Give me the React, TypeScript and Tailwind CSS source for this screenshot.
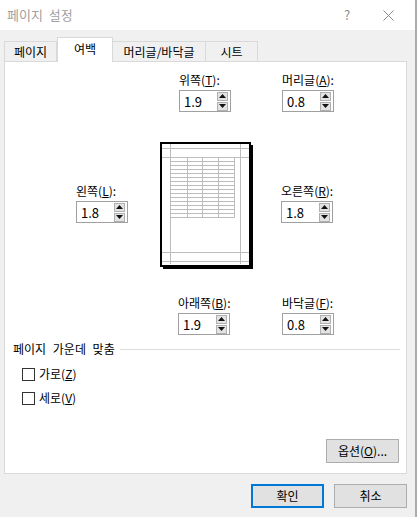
import React from "react";

const font = { fontFamily: '"Noto Sans CJK KR", "Noto Sans", sans-serif' };

function SpinField({ label, hotkey, value }: { label: string; hotkey: string; value: string }) {
  return (
    <div className="w-[52px] flex flex-col">
      <div className="text-[12px] leading-[14px] whitespace-nowrap text-black">
        {label}(<u>{hotkey}</u>):
      </div>
      <div className="mt-[3px] w-[52px] h-[22px] border border-[#a0a0a0] bg-white flex items-center">
        <span className="pl-[4px] text-[13px] leading-none text-black flex-1">{value}</span>
        <div className="flex flex-col gap-[1px] mr-[2px]">
          <div className="w-[11px] h-[9px] bg-[#e3e3e3] border border-[#b0b0b0] flex items-center justify-center">
            <svg width="7" height="4" viewBox="0 0 7 4">
              <polygon points="3.5,0 7,4 0,4" fill="#111" />
            </svg>
          </div>
          <div className="w-[11px] h-[9px] bg-[#e3e3e3] border border-[#b0b0b0] flex items-center justify-center">
            <svg width="7" height="4" viewBox="0 0 7 4">
              <polygon points="0,0 7,0 3.5,4" fill="#111" />
            </svg>
          </div>
        </div>
      </div>
    </div>
  );
}

function PagePreview() {
  const rows = Array.from({ length: 16 }, (_, i) => 15.5 + i * 4);
  return (
    <svg width="94" height="127" viewBox="0 0 94 127">
      <rect x="3" y="3" width="90" height="124" fill="#000" />
      <rect x="1" y="1" width="89" height="123" fill="#fff" stroke="#000" strokeWidth="2" />
      <g stroke="#bdbdbd" strokeWidth="1" fill="none">
        <line x1="10.5" y1="2" x2="10.5" y2="122" />
        <line x1="80.5" y1="2" x2="80.5" y2="122" />
        <line x1="2" y1="6.5" x2="89" y2="6.5" />
        <line x1="2" y1="15.5" x2="89" y2="15.5" />
        <line x1="2" y1="110.5" x2="89" y2="110.5" />
        <line x1="2" y1="119.5" x2="89" y2="119.5" />
        {rows.map((y) => (
          <line key={y} x1="10.5" y1={y} x2="74.5" y2={y} />
        ))}
        <line x1="27.5" y1="15.5" x2="27.5" y2="75.5" />
        <line x1="42.5" y1="15.5" x2="42.5" y2="75.5" />
        <line x1="58.5" y1="15.5" x2="58.5" y2="75.5" />
        <line x1="74.5" y1="15.5" x2="74.5" y2="75.5" />
      </g>
    </svg>
  );
}

function Checkbox({ label, hotkey }: { label: string; hotkey: string }) {
  return (
    <div className="flex items-center gap-[4px] h-[14px]">
      <div className="w-[13px] h-[13px] border border-[#333] bg-white" />
      <span className="text-[12px] leading-[14px] text-black">
        {label}(<u>{hotkey}</u>)
      </span>
    </div>
  );
}

export default function App() {
  return (
    <div className="w-[417px] h-[517px] bg-[#f0f0f0] border-r-2 border-[#ababab] flex flex-col" style={font}>
      {/* Title bar */}
      <div className="h-[30px] bg-white flex items-center pl-[7px] pr-[17px] shrink-0">
        <span className="text-[13px] text-[#a0a0a0] [word-spacing:3px]">페이지 설정</span>
        <div className="flex-1" />
        <span className="w-[20px] text-center text-[13px] text-[#8a8a8a]">?</span>
        <div className="w-[20px] ml-[21px] flex items-center justify-center">
          <svg width="11" height="11" viewBox="0 0 11 11">
            <path d="M0.5 0.5 L10.5 10.5 M10.5 0.5 L0.5 10.5" stroke="#8a8a8a" strokeWidth="1" />
          </svg>
        </div>
      </div>

      <div className="pl-[4px] flex flex-col">
        {/* Tabs */}
        <div className="mt-[7px] h-[24px] flex items-end text-[12px] text-black">
          <div className="w-[53px] h-[20px] border border-b-0 border-[#d9d9d9] bg-[#f0f0f0] flex items-center justify-center">
            페이지
          </div>
          <div className="relative z-10 -mb-px w-[56px] h-[25px] border border-b-0 border-[#d9d9d9] bg-white flex items-center justify-center pb-[3px]">
            여백
          </div>
          <div className="w-[93px] h-[20px] border border-b-0 border-l-0 border-[#d9d9d9] bg-[#f0f0f0] flex items-center justify-center">
            머리글/바닥글
          </div>
          <div className="w-[52px] h-[20px] border border-b-0 border-l-0 border-[#d9d9d9] bg-[#f0f0f0] flex items-center justify-center">
            시트
          </div>
        </div>

        {/* Panel */}
        <div className="w-[403px] h-[413px] border border-[#d9d9d9] bg-white flex flex-col">
          <div className="mt-[11px] ml-[174px] flex gap-[51px]">
            <SpinField label="위쪽" hotkey="T" value="1.9" />
            <SpinField label="머리글" hotkey="A" value="0.8" />
          </div>

          <div className="mt-[30px] flex items-start">
            <div className="ml-[71px] mt-[42px]">
              <SpinField label="왼쪽" hotkey="L" value="1.8" />
            </div>
            <div className="ml-[32px]">
              <PagePreview />
            </div>
            <div className="ml-[27px] mt-[42px]">
              <SpinField label="오른쪽" hotkey="R" value="1.8" />
            </div>
          </div>

          <div className="mt-[27px] ml-[173px] flex gap-[52px]">
            <SpinField label="아래쪽" hotkey="B" value="1.9" />
            <SpinField label="바닥글" hotkey="F" value="0.8" />
          </div>

          <div className="mt-[7px] ml-[8px] mr-[6px] flex items-center gap-[5px]">
            <span className="text-[12px] leading-[14px] text-black whitespace-nowrap [word-spacing:4px]">
              페이지 가운데 맞춤
            </span>
            <div className="flex-1 border-t border-[#dcdcdc]" />
          </div>

          <div className="mt-[11px] ml-[17px] flex flex-col gap-[10px]">
            <Checkbox label="가로" hotkey="Z" />
            <Checkbox label="세로" hotkey="V" />
          </div>

          <div className="mt-auto mb-[10px] mr-[7px] flex justify-end">
            <button className="w-[73px] h-[24px] bg-[#e1e1e1] border border-[#adadad] text-[12px] text-black">
              옵션(<u>O</u>)...
            </button>
          </div>
        </div>

        {/* Dialog buttons */}
        <div className="mt-[10px] pr-[8px] flex justify-end gap-[10px]">
          <button className="w-[73px] h-[24px] bg-[#e1e1e1] border-2 border-[#0078d7] text-[12px] text-black">
            확인
          </button>
          <button className="w-[73px] h-[24px] bg-[#e1e1e1] border border-[#adadad] text-[12px] text-black">
            취소
          </button>
        </div>
      </div>
    </div>
  );
}
